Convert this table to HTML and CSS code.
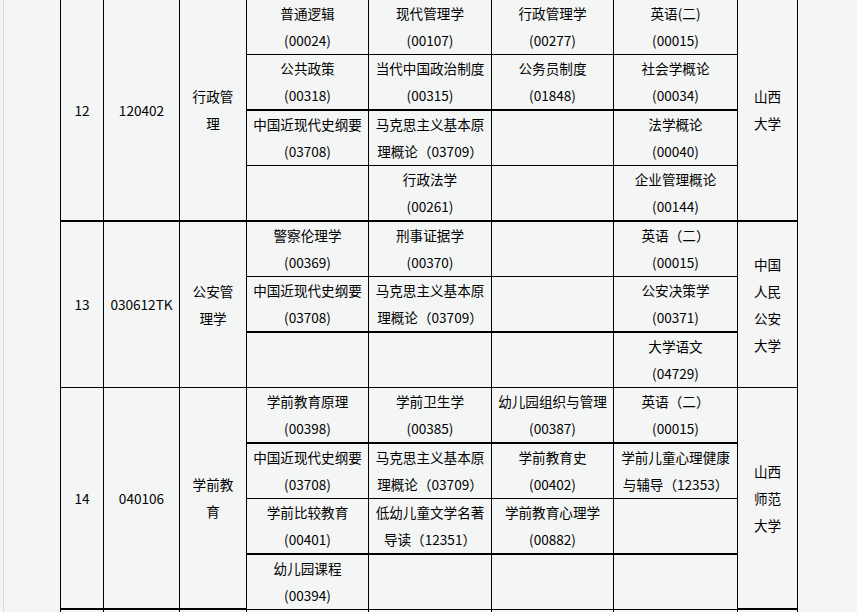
FILE: index.html
```html
<!DOCTYPE html>
<html lang="zh-CN">
<head>
<meta charset="utf-8">
<title>专业课程表</title>
<link rel="stylesheet" href="styles.css">
</head>
<body>
<div class="page">
<table class="plan">
<colgroup>
<col class="c-no"><col class="c-code"><col class="c-major"><col class="c-a"><col class="c-b"><col class="c-c"><col class="c-d"><col class="c-uni">
</colgroup>
<tbody>
<tr>
<td rowspan="4" class="span thick">12</td>
<td rowspan="4" class="span thick">120402</td>
<td rowspan="4" class="span major thick">行政管理</td>
<td>普通逻辑<br>(00024)</td>
<td>现代管理学<br>(00107)</td>
<td>行政管理学<br>(00277)</td>
<td>英语(二)<br>(00015)</td>
<td rowspan="4" class="span uni thick">山西大学</td>
</tr>
<tr>
<td>公共政策<br>(00318)</td>
<td>当代中国政治制度<br>(00315)</td>
<td>公务员制度<br>(01848)</td>
<td>社会学概论<br>(00034)</td>
</tr>
<tr>
<td>中国近现代史纲要<br>(03708)</td>
<td>马克思主义基本原理概论（03709）</td>
<td></td>
<td>法学概论<br>(00040)</td>
</tr>
<tr>
<td></td>
<td>行政法学<br>(00261)</td>
<td></td>
<td>企业管理概论<br>(00144)</td>
</tr>
<tr>
<td rowspan="3" class="span">13</td>
<td rowspan="3" class="span">030612TK</td>
<td rowspan="3" class="span major">公安管理学</td>
<td>警察伦理学<br>(00369)</td>
<td>刑事证据学<br>(00370)</td>
<td></td>
<td>英语（二）<br>(00015)</td>
<td rowspan="3" class="span uni">中国人民公安大学</td>
</tr>
<tr>
<td>中国近现代史纲要<br>(03708)</td>
<td>马克思主义基本原理概论（03709）</td>
<td></td>
<td>公安决策学<br>(00371)</td>
</tr>
<tr>
<td></td>
<td></td>
<td></td>
<td>大学语文<br>(04729)</td>
</tr>
<tr>
<td rowspan="4" class="span">14</td>
<td rowspan="4" class="span">040106</td>
<td rowspan="4" class="span major">学前教育</td>
<td>学前教育原理<br>(00398)</td>
<td>学前卫生学<br>(00385)</td>
<td>幼儿园组织与管理<br>(00387)</td>
<td>英语（二）<br>(00015)</td>
<td rowspan="4" class="span uni">山西师范大学</td>
</tr>
<tr>
<td>中国近现代史纲要<br>(03708)</td>
<td>马克思主义基本原理概论（03709）</td>
<td>学前教育史<br>(00402)</td>
<td>学前儿童心理健康与辅导（12353）</td>
</tr>
<tr>
<td>学前比较教育<br>(00401)</td>
<td>低幼儿童文学名著导读（12351）</td>
<td>学前教育心理学<br>(00882)</td>
<td></td>
</tr>
<tr>
<td>幼儿园课程<br>(00394)</td>
<td></td>
<td></td>
<td></td>
</tr>
<tr>
<td></td><td></td><td></td><td></td><td></td><td></td><td></td><td></td>
</tr>
</tbody>
</table>
</div>
</body>
</html>
```

FILE: styles.css
```css
html, body {
  margin: 0;
  padding: 0;
  background: #f4f6f5;
}

body {
  font-family: "Noto Sans CJK SC", "Noto Sans", sans-serif;
  font-size: 13.6px;
  color: #000;
}

.page {
  margin-left: 3px;
  border-left: 1px solid #d9d9d9;
  padding-left: 56px;
  min-height: 100vh;
}

.plan {
  table-layout: fixed;
  border-collapse: separate;
  border-spacing: 0;
  width: 738px;
  margin-top: -1px;
  border-top: 1px solid #000;
  border-left: 1px solid #000;
}

.c-no { width: 43px; }
.c-code { width: 76px; }
.c-major { width: 67px; }
.c-a { width: 122px; }
.c-b { width: 123px; }
.c-c { width: 122px; }
.c-d { width: 124px; }
.c-uni { width: 60px; }

.plan td {
  box-sizing: border-box;
  height: 55px;
  padding: 0 5px;
  line-height: 27px;
  text-align: center;
  vertical-align: top;
  border-right: 1px solid #000;
  border-bottom: 1px solid #000;
  overflow: hidden;
}

.plan tr:nth-child(even) td {
  border-bottom-width: 2px;
  height: 56px;
}

.plan td.span {
  vertical-align: middle;
}

.plan td.thick {
  border-bottom-width: 2px;
}

.plan td.major {
  padding: 0 8px;
}

.plan td.uni {
  padding: 0 10px;
}
```
